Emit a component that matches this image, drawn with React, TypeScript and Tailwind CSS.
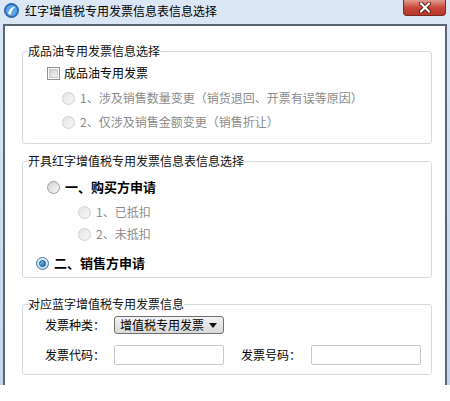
import type { ReactNode } from "react";

const font = { fontFamily: '"Noto Sans CJK SC", "Liberation Sans", sans-serif' };

type RadioState = "off" | "on" | "disabled";

function Radio({ state }: { state: RadioState }) {
  if (state === "on") {
    return (
      <span className="flex h-[13px] w-[13px] shrink-0 items-center justify-center rounded-full border border-[#3d7ab0] bg-gradient-to-b from-[#e6f2fb] to-[#bcd9ee]">
        <span className="h-[7px] w-[7px] rounded-full border border-[#1b4f80] bg-gradient-to-br from-[#7fc4f0] to-[#1a6db2]" />
      </span>
    );
  }
  if (state === "disabled") {
    return (
      <span className="h-[13px] w-[13px] shrink-0 rounded-full border border-[#cfcfcf] bg-gradient-to-br from-[#e4e4e4] to-[#f8f8f8]" />
    );
  }
  return (
    <span className="h-[13px] w-[13px] shrink-0 rounded-full border border-[#9a9a9a] bg-gradient-to-br from-[#d4d4d4] to-[#f7f7f7]" />
  );
}

function Checkbox() {
  return (
    <span className="flex h-[13px] w-[13px] shrink-0 items-center justify-center border border-[#8e8f8f] bg-white">
      <span className="h-[9px] w-[9px] border border-[#c9c9c9] bg-gradient-to-br from-[#cfcfcf] to-[#f2f2f2]" />
    </span>
  );
}

function Group({ title, className, children }: { title: string; className: string; children: ReactNode }) {
  return (
    <fieldset className={`ml-[17px] mr-[13px] rounded-[3px] border border-[#d3dbe2] ${className}`}>
      <legend className="ml-[5px] text-[12px] leading-[14px] text-[#111]">{title}</legend>
      {children}
    </fieldset>
  );
}

function Option({
  state,
  indent,
  className = "",
  bold = false,
  children,
}: {
  state: RadioState;
  indent: string;
  className?: string;
  bold?: boolean;
  children: ReactNode;
}) {
  const text =
    state === "disabled"
      ? "text-[12px] text-[#8a8a8a]"
      : bold
        ? "text-[13px] font-bold text-black"
        : "text-[12px] text-black";
  return (
    <div className={`flex h-[16px] items-center gap-[5px] ${indent} ${className}`}>
      <Radio state={state} />
      <span className={`whitespace-nowrap leading-[16px] ${text}`}>{children}</span>
    </div>
  );
}

function CloseButton() {
  return (
    <div className="flex h-[16px] w-[43px] items-center justify-center rounded-b-[4px] border border-t-0 border-[#7a2a22] bg-gradient-to-b from-[#e09a8e] via-[#c9493a] to-[#b3372a]">
      <svg width="14" height="11" viewBox="0 0 14 11">
        <path d="M3 1.5 L11 9.5 M11 1.5 L3 9.5" stroke="#5a1e18" strokeWidth="4" strokeLinecap="round" />
        <path d="M3 1.5 L11 9.5 M11 1.5 L3 9.5" stroke="#ffffff" strokeWidth="2.2" strokeLinecap="round" />
      </svg>
    </div>
  );
}

function AppIcon() {
  return (
    <svg width="15" height="15" viewBox="0 0 15 15">
      <circle cx="7.5" cy="7.5" r="7" fill="#2a72c4" stroke="#1b4f8c" strokeWidth="0.8" />
      <circle cx="7.5" cy="7.5" r="5.5" fill="#5aa5e8" />
      <path d="M4 11 C 5 6, 8 4, 11.5 3.5 C 9 5.5, 7.5 8, 7 11.5 Z" fill="#ffffff" />
    </svg>
  );
}

export default function App() {
  return (
    <div className="h-[401px] w-[450px] overflow-hidden bg-white" style={font}>
      <div className="flex h-[385px] flex-col bg-gradient-to-b from-[#dbe7f5] to-[#c3d6ec]">
        {/* title bar */}
        <div className="flex h-[24px] shrink-0 items-start">
          <div className="flex items-center gap-[6px] pl-[4px] pt-[3px]">
            <AppIcon />
            <span className="text-[12px] leading-[15px] text-black">红字增值税专用发票信息表信息选择</span>
          </div>
          <div className="ml-auto mr-[4px]">
            <CloseButton />
          </div>
        </div>

        {/* client area */}
        <div className="mx-[3px] flex-1 border-x-2 border-t-2 border-[#5b6673] bg-white">
          <Group title="成品油专用发票信息选择" className="mt-[18px] pb-[13px]">
            <div className="mt-[7px] flex h-[16px] items-center gap-[4px] pl-[24px]">
              <Checkbox />
              <span className="text-[12px] leading-[16px] text-black">成品油专用发票</span>
            </div>
            <Option state="disabled" indent="pl-[39px]" className="mt-[9px]">
              1、涉及销售数量变更（销货退回、开票有误等原因）
            </Option>
            <Option state="disabled" indent="pl-[39px]" className="mt-[8px]">
              2、仅涉及销售金额变更（销售折让）
            </Option>
          </Group>

          <Group title="开具红字增值税专用发票信息表信息选择" className="mt-[10px] pb-[6px]">
            <Option state="off" indent="pl-[24px]" className="mt-[11px]" bold>
              一、购买方申请
            </Option>
            <Option state="disabled" indent="pl-[55px]" className="mt-[9px]">
              1、已抵扣
            </Option>
            <Option state="disabled" indent="pl-[55px]" className="mt-[6px]">
              2、未抵扣
            </Option>
            <Option state="on" indent="pl-[13px]" className="mt-[13px]" bold>
              二、销售方申请
            </Option>
          </Group>

          <Group title="对应蓝字增值税专用发票信息" className="mt-[19px] pb-[9px]">
            <div className="mt-[5px] flex items-center pl-[22px]">
              <span className="w-[69px] text-[12px] leading-[16px] text-black">发票种类：</span>
              <div className="flex h-[18px] w-[110px] items-center justify-between rounded-[3px] border border-[#707070] bg-gradient-to-b from-[#f3f3f3] to-[#d9d9d9] pl-[5px] pr-[6px]">
                <span className="text-[12px] leading-[16px] text-black">增值税专用发票</span>
                <svg width="8" height="5" viewBox="0 0 8 5">
                  <path d="M0 0 H8 L4 5 Z" fill="#111" />
                </svg>
              </div>
            </div>
            <div className="mt-[11px] flex items-center pl-[22px]">
              <span className="w-[69px] text-[12px] leading-[16px] text-black">发票代码：</span>
              <div className="h-[20px] w-[110px] rounded-[2px] border border-[#c8c8c8] bg-white" />
              <span className="ml-[17px] w-[70px] text-[12px] leading-[16px] text-black">发票号码：</span>
              <div className="h-[20px] w-[110px] rounded-[2px] border border-[#c8c8c8] bg-white" />
            </div>
          </Group>
        </div>
      </div>
    </div>
  );
}
